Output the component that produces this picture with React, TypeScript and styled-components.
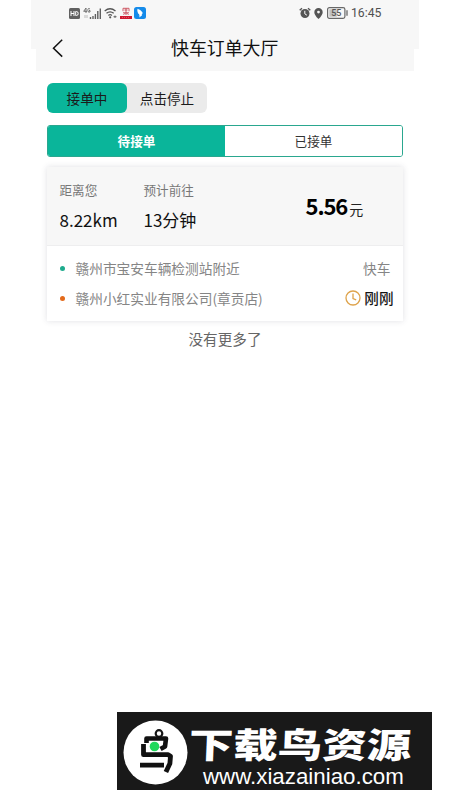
import React from 'react';
import styled, { createGlobalStyle } from 'styled-components';

const GlobalStyle = createGlobalStyle`
  * { box-sizing: border-box; }
  body {
    margin: 0;
    background: #fff;
    font-family: "Noto Sans CJK SC", "Noto Sans", sans-serif;
    color: #111;
  }
`;

const Page = styled.div`
  width: 450px;
  height: 800px;
  display: flex;
  flex-direction: column;
  background: #fff;
  overflow: hidden;
  white-space: nowrap;
`;

const StatusBar = styled.div`
  display: flex;
  align-items: center;
  justify-content: space-between;
  height: 26px;
  margin: 0 31px;
  padding: 0 38px 0 38px;
  background: #f7f7f7;
`;

const StatusGroup = styled.div<{ $gap: number }>`
  display: flex;
  align-items: center;
  height: 26px;
  gap: ${(p) => p.$gap}px;
`;

const Clock = styled.span`
  width: 30px;
  font: 12.2px/26px Roboto, sans-serif;
  color: #505050;
`;

const NavUpper = styled.div`
  height: 23px;
  margin: 0 31px;
  background: #f7f7f7;
`;

const NavBar = styled.div`
  display: flex;
  align-items: center;
  height: 45px;
  margin: -23px 36px 0;
  padding: 0 0 2px 16px;
  background: #f7f7f7;
`;

const Title = styled.h1`
  margin: 0 0 0 107px;
  font-size: 17.9px;
  line-height: 43px;
  font-weight: 400;
  color: #111;
`;

const Content = styled.main`
  display: flex;
  flex-direction: column;
  width: 356px;
  margin: 12px 0 0 47px;
`;

const Switcher = styled.div`
  display: flex;
  width: 160px;
  height: 30px;
  border-radius: 6px;
  background: #ebebeb;
`;

const SwitchItem = styled.div<{ $on?: boolean }>`
  flex: 1;
  border-radius: 6px;
  background: ${(p) => (p.$on ? '#0ab59a' : 'transparent')};
  font-size: 13.6px;
  line-height: 31px;
  text-align: center;
  color: #1b1b1b;
`;

const Tabs = styled.div`
  display: flex;
  height: 32px;
  margin-top: 12px;
  border: 1px solid #2aa78f;
  border-radius: 3px;
  overflow: hidden;
`;

const Tab = styled.div<{ $on?: boolean }>`
  flex: 1;
  background: ${(p) => (p.$on ? '#0ab59a' : '#fff')};
  color: ${(p) => (p.$on ? '#fff' : '#333')};
  font-size: 12.6px;
  font-weight: ${(p) => (p.$on ? 700 : 400)};
  line-height: 30px;
  text-align: center;
`;

const Card = styled.section`
  height: 154px;
  margin-top: 10px;
  background: #fff;
  box-shadow: 0 0 6px rgba(60, 60, 90, 0.16);
`;

const Summary = styled.div`
  display: flex;
  height: 79px;
  padding: 13px 0 0 12.5px;
  background: #f7f7f7;
  border-bottom: 1px solid #eeeeef;
`;

const Metric = styled.div<{ $width: number }>`
  width: ${(p) => p.$width}px;
`;

const MetricLabel = styled.div`
  font-size: 12.6px;
  line-height: 20px;
  color: #777;
`;

const MetricValue = styled.div`
  margin-top: 7px;
  font-size: 17px;
  line-height: 26px;
  color: #111;
`;

const Price = styled.div`
  display: flex;
  align-items: baseline;
  gap: 2px;
  margin-top: 8px;
  height: 34px;
  line-height: 34px;
  font-size: 14px;
  color: #222;
`;

const Amount = styled.strong`
  font-size: 22px;
  letter-spacing: -1.1px;
  font-weight: 700;
  color: #000;
`;

const Routes = styled.div`
  display: flex;
  flex-direction: column;
  padding: 7px 9.5px 0 12.5px;
`;

const Route = styled.div`
  display: flex;
  align-items: center;
  height: 30px;
  font-size: 13.7px;
  line-height: 30px;
  color: #858585;
`;

const Dot = styled.i<{ $color: string }>`
  width: 5px;
  height: 5px;
  margin-right: 11px;
  border-radius: 50%;
  background: ${(p) => p.$color};
`;

const Kind = styled.span`
  margin: 0 3px 0 auto;
`;

const Time = styled.span`
  display: flex;
  align-items: center;
  gap: 3px;
  margin-left: auto;
  font-size: 14.6px;
  font-weight: 500;
  color: #151515;
`;

const EndNote = styled.div`
  margin-top: 7px;
  font-size: 14.6px;
  line-height: 22px;
  text-align: center;
  color: #666;
`;

const Banner = styled.footer`
  display: flex;
  align-items: flex-start;
  width: 315px;
  height: 78px;
  margin: auto 0 10px 117px;
  padding: 8px 0 0 6px;
  background: #191919;
  color: #fff;
`;

const BannerText = styled.div`
  margin-left: 1px;
`;

const BannerName = styled.div`
  width: 180px;
  height: 44px;
  font-size: 36px;
  line-height: 44px;
  font-weight: 900;
  transform: scale(1.235, 0.97) skewX(-2deg);
  transform-origin: 0 50%;
`;

const BannerUrl = styled.div`
  margin-left: 14px;
  font: 22.3px/26px "Liberation Sans", Arial, sans-serif;
`;

const HdIcon = () => (
  <svg width="11" height="11" viewBox="0 0 11 11">
    <rect width="11" height="11" rx="1.5" fill="#606060" />
    <path d="M2 3v5M5 3v5M2 5.5h3M6.7 3.5v4h.8q1.7 0 1.7-2t-1.7-2z" fill="none" stroke="#fff" />
  </svg>
);

const SignalIcon = () => (
  <svg width="19" height="13" viewBox="0 0 19 13">
    <path d="M3 6V1L.7 4.3H4M7 2Q4.8.6 4.8 3.3T7 5V3.5H6" fill="none" stroke="#666" strokeWidth=".9" />
    <path d="M2 8v3M4 8v3" stroke="#bbb" />
    <path d="M7.5 12v-2M10 12V9M12.4 12V7M14.8 12V4M17.3 12V1.5" stroke="#606060" strokeWidth="1.4" />
  </svg>
);

const WifiIcon = () => (
  <svg width="13" height="12" viewBox="0 0 13 12">
    <path d="M.7 4q5.3-4.5 10.8 0M2.5 6.3q3.5-3 7.2 0M4.4 8.4q1.7-1.4 3.5 0" fill="none" stroke="#555" strokeWidth="1.3" />
    <circle cx="6.2" cy="10.3" r="1.1" fill="#555" />
    <path d="M9.5 9.7h3M11 8.5v2.5" stroke="#666" />
  </svg>
);

const RedAppIcon = () => (
  <svg width="12" height="12" viewBox="0 0 12 12">
    <path d="M3 4.2V1.3h6v2.9M4.5 3h3M3 5.8h6M6 1v7M3.5 7.8l2-2M8.5 7.8l-2-2" fill="none" stroke="#ce5b66" />
    <path d="M0 9h12v3H0z" fill="#cf1930" />
    <path d="M2 10.5h8" stroke="#e57b85" strokeWidth=".6" strokeDasharray="1 1" />
  </svg>
);

const BlueAppIcon = () => (
  <svg width="12" height="12" viewBox="0 0 12 12">
    <rect width="12" height="12" rx="2.5" fill="#158bea" />
    <path d="M3.5 1.8q3 1 4.7 3.2.9 1 0 2l-.6 1 .6.2-3 2.2.5-1.8-1-.3.7-.8Q3.8 6.8 3.7 5.3 3 4 3.5 1.8z" fill="#fff" />
  </svg>
);

const AlarmIcon = () => (
  <svg width="12" height="12" viewBox="0 0 12 12">
    <circle cx="6" cy="6.5" r="4.5" fill="#555" />
    <path d="M.7 3.2 3 1.2M11.3 3.2 9 1.2" stroke="#555" strokeWidth="1.4" />
    <path d="M5.8 3.8v3l2.1 1.4" stroke="#fff" fill="none" />
  </svg>
);

const PinIcon = () => (
  <svg width="9" height="11" viewBox="0 0 9 11">
    <path d="M4.5 11Q.3 7 .3 4.2a4.2 4.2 0 0 1 8.4 0Q8.7 7 4.5 11z" fill="#555" />
    <circle cx="4.5" cy="4.1" r="1.4" fill="#f7f7f7" />
  </svg>
);

const BatteryIcon = () => (
  <svg width="21" height="12" viewBox="0 0 21 12">
    <rect x=".6" y=".6" width="17.3" height="10.8" rx="1.8" fill="none" stroke="#686868" strokeWidth="1.2" />
    <path d="M2.3 2.3h7.5v7.4H2.3z" fill="#c1c1c1" />
    <text x="9.3" y="9.3" textAnchor="middle" fontFamily="Roboto" fontSize="9" fontWeight="500" fill="#555">55</text>
    <path d="M20 3.2v5.6" stroke="#686868" strokeWidth="1.3" />
  </svg>
);

const BackIcon = () => (
  <svg width="12" height="20" viewBox="0 0 12 20">
    <path d="M10.2 1.7 1.5 10.2l8.7 8.4" fill="none" stroke="#111" strokeWidth="1.5" />
  </svg>
);

const ClockIcon = () => (
  <svg width="16" height="16" viewBox="0 0 16 16">
    <g fill="none" stroke="#dea34b" strokeWidth="1.3">
      <circle cx="8" cy="8" r="7" />
      <path d="M8 3.5v5l3.2 1.3" />
    </g>
  </svg>
);

const BirdLogo = () => (
  <svg width="65" height="65" viewBox="0 0 65 65">
    <circle cx="32.5" cy="32.5" r="32" fill="#fff" />
    <circle cx="36" cy="13.5" r="3.3" fill="none" stroke="#161616" strokeWidth="2.2" />
    <path d="M23.5 23v-4.5H43l-1 8-4.5 2.5" fill="none" stroke="#111" strokeWidth="4.6" strokeLinejoin="round" />
    <path d="M20.5 24v10.7h24.7l2.3 1.5-.6 7.3-4 8.5M17 45.2h24" fill="none" stroke="#111" strokeWidth="4.8" strokeLinejoin="round" />
    <circle cx="31.5" cy="26.5" r="4.8" fill="#20d85c" />
  </svg>
);

export default function App() {
  return (
    <>
      <GlobalStyle />
      <Page>
        <StatusBar>
          <StatusGroup $gap={2.5}>
            <HdIcon /><SignalIcon /><WifiIcon /><RedAppIcon /><BlueAppIcon />
          </StatusGroup>
          <StatusGroup $gap={3.5}>
            <AlarmIcon /><PinIcon /><BatteryIcon /><Clock>16:45</Clock>
          </StatusGroup>
        </StatusBar>
        <NavUpper />
        <NavBar>
          <BackIcon />
          <Title>快车订单大厅</Title>
        </NavBar>
        <Content>
          <Switcher>
            <SwitchItem $on>接单中</SwitchItem>
            <SwitchItem>点击停止</SwitchItem>
          </Switcher>
          <Tabs>
            <Tab $on>待接单</Tab>
            <Tab>已接单</Tab>
          </Tabs>
          <Card>
            <Summary>
              <Metric $width={84}>
                <MetricLabel>距离您</MetricLabel>
                <MetricValue>8.22km</MetricValue>
              </Metric>
              <Metric $width={162}>
                <MetricLabel>预计前往</MetricLabel>
                <MetricValue>13分钟</MetricValue>
              </Metric>
              <Price><Amount>5.56</Amount>元</Price>
            </Summary>
            <Routes>
              <Route>
                <Dot $color="#1eab8d" />
                赣州市宝安车辆检测站附近
                <Kind>快车</Kind>
              </Route>
              <Route>
                <Dot $color="#e36a1b" />
                赣州小红实业有限公司(章贡店)
                <Time><ClockIcon />刚刚</Time>
              </Route>
            </Routes>
          </Card>
          <EndNote>没有更多了</EndNote>
        </Content>
        <Banner>
          <BirdLogo />
          <BannerText>
            <BannerName>下载鸟资源</BannerName>
            <BannerUrl>www.xiazainiao.com</BannerUrl>
          </BannerText>
        </Banner>
      </Page>
    </>
  );
}
